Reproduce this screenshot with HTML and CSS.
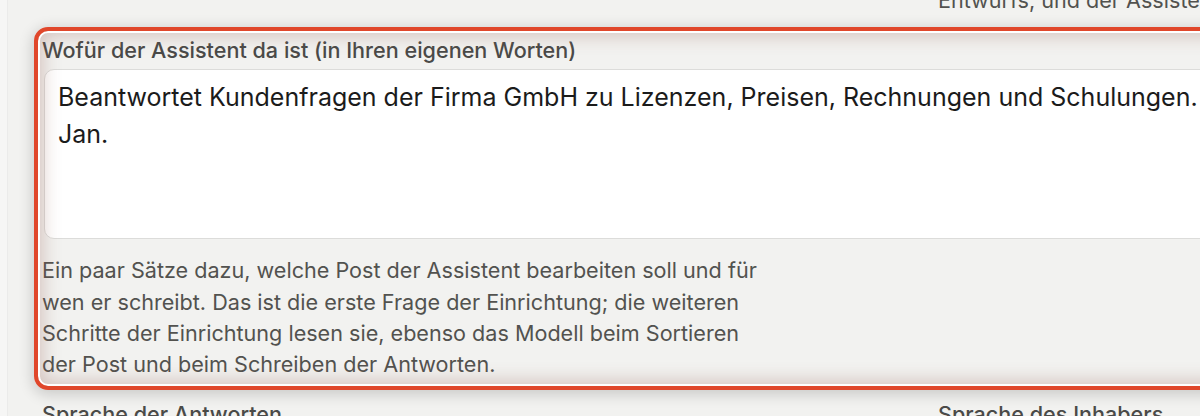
FILE: index.html
```html
<!DOCTYPE html>
<html lang="de">
<head>
<meta charset="utf-8">
<title>Assistent einrichten</title>
<link rel="stylesheet" href="styles.css">
</head>
<body>
<div class="page">
  <div class="grid">
    <div class="cell"></div>
    <p class="hint top-hint">Entwurfs, und der Assistent formuliert die Antwort.</p>

    <div class="field field-wide">
      <label class="label">Wofür der Assistent da ist (in Ihren eigenen Worten)</label>
      <div class="textarea">Beantwortet Kundenfragen der Firma GmbH zu Lizenzen, Preisen, Rechnungen und Schulungen.
Jan.</div>
      <p class="hint help">Ein paar Sätze dazu, welche Post der Assistent bearbeiten soll und für wen er schreibt. Das ist die erste Frage der Einrichtung; die weiteren Schritte der Einrichtung lesen sie, ebenso das Modell beim Sortieren der Post und beim Schreiben der Antworten.</p>
    </div>

    <div class="field"><label class="label">Sprache der Antworten</label></div>
    <div class="field"><label class="label">Sprache des Inhabers</label></div>
  </div>
</div>
</body>
</html>
```

FILE: styles.css
```css
html, body {
  margin: 0;
  padding: 0;
  background: #f6f6f5;
  overflow: hidden;
  height: 416px;
}

body {
  font-family: Inter, "Noto Sans", "Liberation Sans", sans-serif;
  color: #1b1b1b;
}

.page {
  margin-left: 8px;
  width: 1900px;
  min-height: 440px;
  background: #f2f2f0;
  box-shadow: -1px 0 0 #ebebea;
  padding-left: 34px;
}

.grid {
  display: grid;
  grid-template-columns: 872px 872px;
  column-gap: 24px;
  row-gap: 19px;
  margin-top: -15px;
}

.hint {
  margin: 0;
  font-size: 21.6px;
  line-height: 31.3px;
  color: #52524f;
}

.field {
  position: relative;
}

.field-wide {
  grid-column: 1 / -1;
}

.field-wide::after {
  content: "";
  position: absolute;
  top: -8px;
  left: -8px;
  right: -8px;
  bottom: -10px;
  border: 4px solid #e0472b;
  border-radius: 14px;
  pointer-events: none;
  box-shadow:
    inset 0 0 0 2px #ffffff,
    inset 0 0 18px 5px rgba(150, 95, 85, 0.32),
    0 3px 14px 2px rgba(0, 0, 0, 0.16);
}

.label {
  display: block;
  font-size: 21.6px;
  line-height: 30px;
  font-weight: 500;
  color: #4a4a48;
}

.textarea {
  margin: 4px 0 0 2px;
  height: 170px;
  box-sizing: border-box;
  background: #ffffff;
  border: 1px solid #dcdcda;
  border-radius: 10px;
  padding: 9px 13px;
  font-size: 25px;
  line-height: 37px;
  color: #1b1b1b;
  white-space: pre-wrap;
}

.help {
  margin-top: 16px;
  max-width: 730px;
}
```
